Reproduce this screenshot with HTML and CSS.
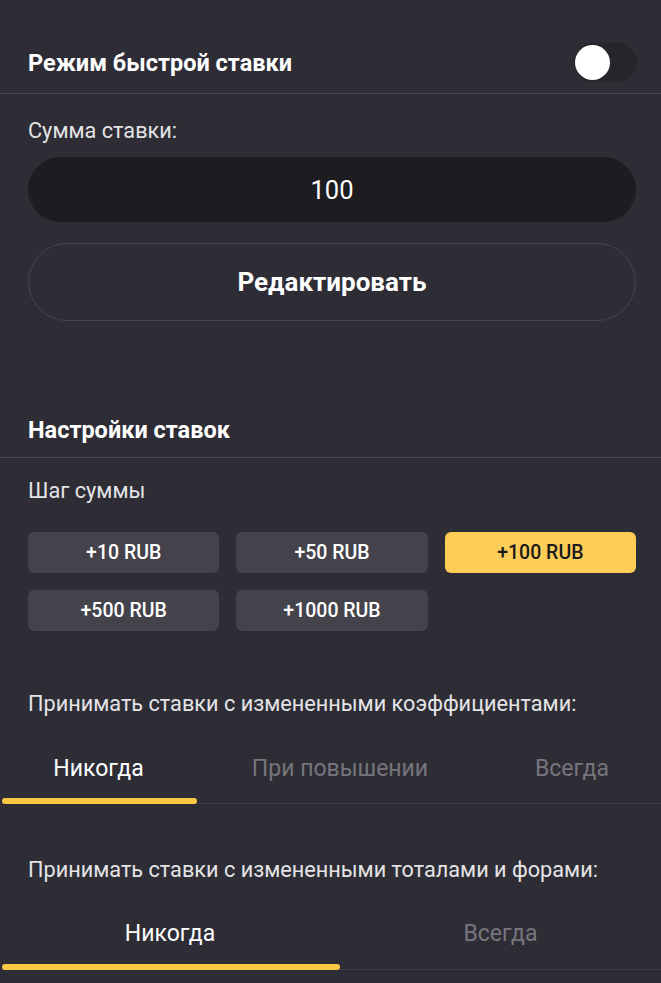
FILE: index.html
```html
<!DOCTYPE html>
<html lang="ru">
<head>
<meta charset="utf-8">
<link rel="stylesheet" href="styles.css">
</head>
<body>
<div class="panel">
  <div class="head-row">
    <span class="title">Режим быстрой ставки</span>
    <span class="toggle"><span class="knob"></span></span>
  </div>
  <div class="block">
    <div class="label">Сумма ставки:</div>
    <div class="amount">100</div>
    <div class="edit-btn">Редактировать</div>
  </div>
  <div class="head-row settings">
    <span class="title">Настройки ставок</span>
  </div>
  <div class="block step">
    <div class="label">Шаг суммы</div>
    <div class="chips">
      <div class="chip">+10 RUB</div>
      <div class="chip">+50 RUB</div>
      <div class="chip active">+100 RUB</div>
      <div class="chip">+500 RUB</div>
      <div class="chip">+1000 RUB</div>
    </div>
  </div>
  <div class="label question q1">Принимать ставки с измененными коэффициентами:</div>
  <div class="tabs three">
    <div class="tab active">Никогда</div>
    <div class="tab">При повышении</div>
    <div class="tab">Всегда</div>
  </div>
  <div class="label question q2">Принимать ставки с измененными тоталами и форами:</div>
  <div class="tabs two">
    <div class="tab active">Никогда</div>
    <div class="tab">Всегда</div>
  </div>
</div>
</body>
</html>
```
FILE: styles.css
```css
* { box-sizing: border-box; }
html, body { margin: 0; padding: 0; }
body {
  background: #2e2d36;
  font-family: Roboto, "Liberation Sans", sans-serif;
  color: #ffffff;
  width: 661px;
  height: 983px;
  overflow: hidden;
}
.panel { padding-top: 32px; }
.head-row {
  display: flex;
  align-items: center;
  justify-content: space-between;
  height: 62px;
  padding: 0 24px 0 28px;
  border-bottom: 1px solid #45444c;
}
.head-row .title { font-size: 23.5px; font-weight: 700; line-height: 26px; }
.toggle {
  width: 63px; height: 39px;
  border-radius: 20px;
  background: #26252b;
  display: flex; align-items: center;
  padding-left: 1px;
}
.knob {
  width: 35px; height: 35px; border-radius: 50%;
  background: #ffffff;
}
.block { padding: 0 25px 0 28px; }
.label { font-size: 21.7px; color: #e4e4e6; line-height: 26px; }
.block .label { padding-top: 24px; }
.amount {
  margin-top: 13px;
  height: 65px;
  border-radius: 33px;
  background: #1d1c21;
  display: flex; align-items: center; justify-content: center;
  font-size: 25.5px;
}
.edit-btn {
  margin-top: 21px;
  height: 78px;
  border-radius: 39px;
  border: 1px solid #46454d;
  display: flex; align-items: center; justify-content: center;
  font-size: 26px; font-weight: 700;
}
.head-row.settings {
  height: auto;
  padding: 96px 28px 14px;
}
.step .label { padding-top: 20px; }
.chips {
  margin-top: 28px;
  display: grid;
  grid-template-columns: repeat(3, 1fr);
  gap: 17px;
}
.chip {
  height: 41px;
  border-radius: 6px;
  background: #44434b;
  display: flex; align-items: center; justify-content: center;
  font-size: 19.5px; font-weight: 500;
}
.chip.active { background: #fecd58; color: #1a1a1a; }
.question { padding: 0 28px; }
.q1 { margin-top: 60px; }
.q2 { margin-top: 53px; }
.tabs {
  display: grid;
  border-bottom: 1px solid #3e3d45;
}
.tabs.three { grid-template-columns: 197px 286px 1fr; margin-top: 40px; height: 47px; }
.tabs.two { grid-template-columns: 340px 1fr; margin-top: 39px; height: 48px; }
.tab {
  position: relative;
  text-align: center;
  font-size: 23px;
  color: #76757c;
  line-height: 24px;
}
.tab.active { color: #ffffff; }
.tab.active::after {
  content: "";
  position: absolute;
  left: 2px; right: 0; bottom: -1px;
  height: 6px;
  border-radius: 3px;
  background: #fcc944;
}
```
